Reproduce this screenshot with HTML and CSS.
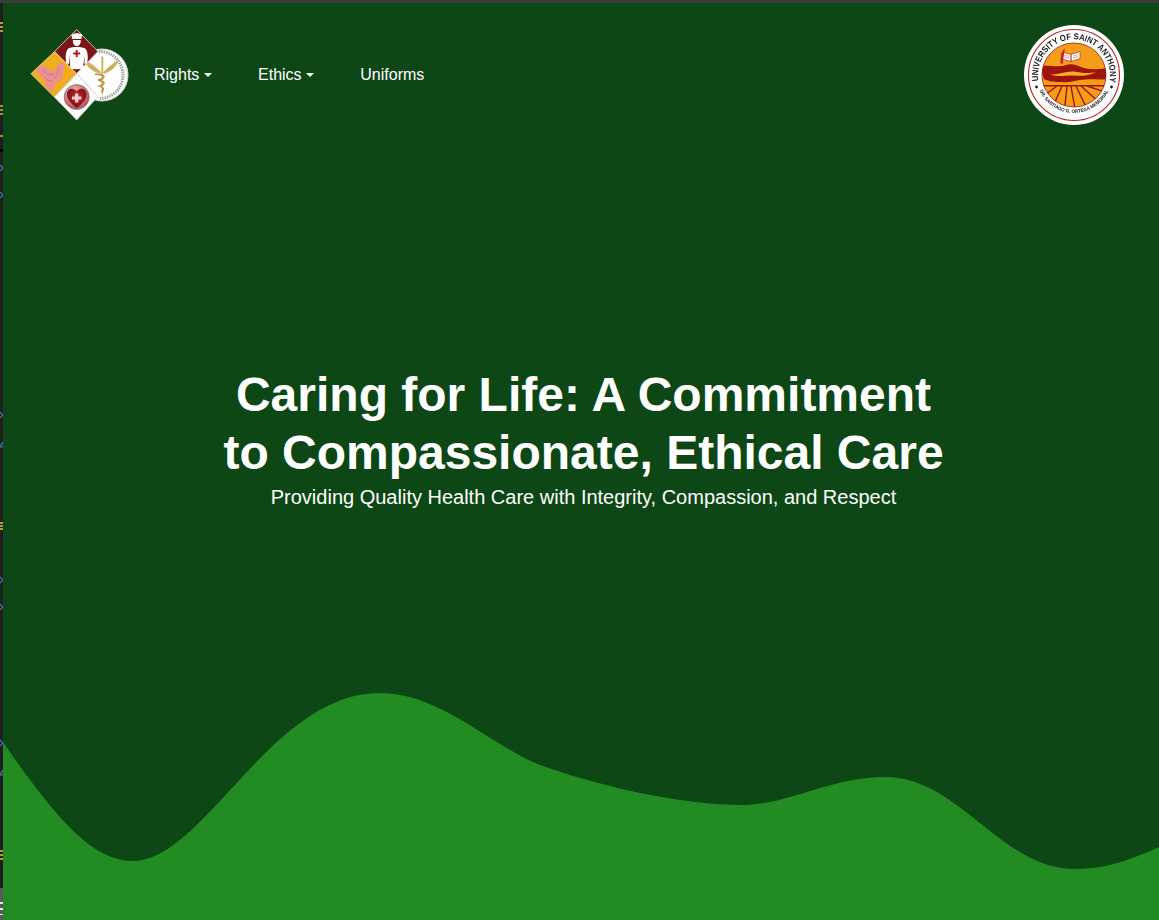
FILE: index.html
```html
<!DOCTYPE html>
<html lang="en">
<head>
<meta charset="utf-8">
<title>Caring for Life</title>
<link rel="stylesheet" href="styles.css">
</head>
<body>
<div class="topbar"></div>
<div class="frame">
  <aside class="strip">
    <svg class="strip-art" viewBox="0 3 3 917" preserveAspectRatio="none" aria-hidden="true">
      <g fill="#b59a2f">
        <rect y="22" width="3" height="2"/><rect y="26" width="3" height="2"/><rect y="30" width="3" height="2"/>
        <rect y="522" width="3" height="2"/><rect y="525" width="3" height="2"/><rect y="528" width="3" height="2"/>
        <rect y="850" width="3" height="2"/><rect y="854" width="3" height="2"/><rect y="858" width="3" height="2"/>
      </g>
      <g fill="#8c9a3a">
        <rect y="105" width="3" height="2"/><rect y="109" width="3" height="2"/><rect y="113" width="3" height="2"/><rect y="135" width="3" height="2"/>
      </g>
      <rect y="149" width="3" height="3" fill="#000"/>
      <g fill="none" stroke="#4a7ab8" stroke-width="1.200">
        <path d="M0 165l3 3-3 3M0 192l3 3-3 3M0 412l3 3-3 3M3 442l-3 5h3M0 577l3 3-3 3M0 604l3 3-3 3M0 740l3 3-3 3M3 770l-3 5h3"/>
      </g>
      <rect y="888" width="3" height="32" fill="#5a5a5a"/>
      <g fill="#e6e6e6">
        <rect y="902" width="3" height="2"/><rect y="908" width="3" height="2"/><rect y="914" width="3" height="1"/>
      </g>
    </svg>
  </aside>
  <div class="page">
    <svg class="wave" viewBox="3 680 1156 240" preserveAspectRatio="none" aria-hidden="true">
      <path d="M3 742C50 810 90 861 132 861C205 861 270 693 380 693C440 693 490 745 540 765C610 790 690 805 740 805C790 805 830 777 885 777C960 777 1000 869 1075 869C1105 869 1130 860 1159 847V920H3Z"/>
    </svg>
    <header class="header">
      <a class="logo" href="#" aria-label="Nursing logo">
        <svg viewBox="0 0 100 100" class="logo-art">
          <defs>
            <radialGradient id="heart-ring" cx=".4" cy=".35" r=".8">
              <stop offset="0" stop-color="#f3c9c9"/>
              <stop offset=".7" stop-color="#c9585c"/>
              <stop offset="1" stop-color="#7a7a7a"/>
            </radialGradient>
            <radialGradient id="heart-fill" cx=".5" cy=".4" r=".7">
              <stop offset="0" stop-color="#c9282e"/>
              <stop offset="1" stop-color="#5e0b10"/>
            </radialGradient>
          </defs>
          <circle cx="72" cy="50" r="26" fill="#fff" stroke="#d6d6d6" stroke-width="1"/>
          <path d="M69 26.500A23.500 23.500 0 1 1 70 73.500" fill="none" stroke="#a3a3a3" stroke-width="3" stroke-dasharray="1.500 .9"/>
          <g fill="#cfb05c">
            <path d="M71.300 31.500h2l-.2 36-.8 3.500-.8-3.500z"/>
            <path d="M71 47C66 42 61 38 54 34.500C56 41 62 47 71 49z"/>
            <path d="M73.500 47C78 42 83 38 89 34.500C87 41 81 47 73.500 49z"/>
          </g>
          <path d="M65 49C76 50 77 53 68 55C76 57 76 59 69 61C75 63 74 65 71.500 67" fill="none" stroke="#ad8f3c" stroke-width="1.300"/>
          <path d="M46.700 4.500L68 26.500 46.700 48.500 24.500 26.500z" fill="#7d1518" stroke="#e8e3e0" stroke-width=".8"/>
          <path d="M24.500 26.500L46.700 48.700 24.300 72 1 48.700z" fill="#f0ad1e" stroke="#e8d9a8" stroke-width=".8"/>
          <path d="M46.700 48.700L68 71.500 46.700 95 24.300 72z" fill="#fff" stroke="#c8c8c8" stroke-width=".9"/>
          <path d="M41.500 10C44 7.500 49.500 7.500 52 10L51.500 14H42z" fill="#fff"/>
          <path d="M42.800 15H50.800C50.800 19 49 21 46.800 21C44.600 21 42.800 19 42.800 15z" fill="#fff"/>
          <path d="M39 23C43 21.500 50.500 21.500 54.500 23C58 25 58.500 33 57 38.500L54.500 39 54.500 30 53 43.500C49 44.500 44 44.500 40.500 43.500L39 30 39 39 36.500 38.500C35 33 35.500 25 39 23z" fill="#fff"/>
          <path d="M45.700 25h2v2.500h2.500v2h-2.500v2.500h-2v-2.500h-2.500v-2h2.500z" fill="#b01e22"/>
          <g fill="#ea8f95">
            <ellipse cx="13" cy="46" rx="5.800" ry="5.300"/>
            <ellipse cx="20" cy="52" rx="9" ry="6.500" transform="rotate(25 20 52)"/>
            <ellipse cx="30" cy="45" rx="4" ry="7.500" transform="rotate(15 30 45)"/>
            <ellipse cx="27" cy="53" rx="6.500" ry="4.200" transform="rotate(-35 27 53)"/>
            <ellipse cx="20" cy="61" rx="3.800" ry="4.500"/>
          </g>
          <path d="M13 44C15 49 20 50 24 49M28 41C29 46 28 49 25 53M15 52C17 56 21 57 23 55" fill="none" stroke="#c9626a" stroke-width=".6"/>
          <circle cx="46.700" cy="72" r="12.500" fill="url(#heart-ring)"/>
          <circle cx="46.700" cy="72" r="12.500" fill="none" stroke="#6f6f6f" stroke-width=".7"/>
          <path d="M46.700 83C41 78.500 37 74.500 37 69.500C37 63 44 62 46.700 66.500C49.400 62 56.400 63 56.400 69.500C56.400 74.500 52.400 78.500 46.700 83z" fill="url(#heart-fill)"/>
          <path d="M45 68.500h3.400v3h3v3h-3v3h-3.400v-3h-3v-3h3z" fill="#f2cfcf"/>
        </svg>
      </a>
      <nav class="nav">
        <a class="nav-link caret" href="#">Rights</a>
        <a class="nav-link caret" href="#">Ethics</a>
        <a class="nav-link" href="#">Uniforms</a>
      </nav>
      <a class="seal" href="#" aria-label="University of Saint Anthony">
        <svg viewBox="0 0 100 100" class="seal-art">
          <defs>
            <clipPath id="disc"><circle cx="50" cy="50" r="32"/></clipPath>
            <path id="arc-top" d="M14.600 57A36 36 0 1 1 85.400 57"/>
            <path id="arc-bottom" d="M15.100 65A38 38 0 0 0 84.900 65"/>
          </defs>
          <circle cx="50" cy="50" r="50" fill="#fff"/>
          <circle cx="50" cy="50" r="45.500" fill="none" stroke="#b5272d" stroke-width="1.100"/>
          <text class="seal-top"><textPath href="#arc-top" startOffset="1" textLength="125" lengthAdjust="spacingAndGlyphs">UNIVERSITY OF SAINT ANTHONY</textPath></text>
          <text class="seal-bottom"><textPath href="#arc-bottom" startOffset="1" textLength="86" lengthAdjust="spacingAndGlyphs">DR. SANTIAGO G. ORTEGA MEMORIAL</textPath></text>
          <circle cx="12.500" cy="62" r="1.400" fill="#222"/>
          <circle cx="87.500" cy="62" r="1.400" fill="#222"/>
          <circle cx="50" cy="50" r="32" fill="#f59c18"/>
          <g clip-path="url(#disc)">
            <path d="M16 41C26 40 34 43 42 40C48 38 54 41 60 43C68 45 76 44 84 43V54C76 55 70 54 62 54.500C52 55 46 58 38 57C32 56.500 28 58 20 54z" fill="#9c1410"/>
            <path d="M26 49.500C36 49.500 42 46 50 46.500C56 47 62 49.500 72 47C64 51.500 56 51 50 50.500C42 50 36 52.500 26 49.500z" fill="#f8ac24"/>
            <path d="M16 60H84V61.500H16z" fill="#9c1410"/>
            <g fill="none" stroke="#9c1410" stroke-width="1.400">
              <path d="M33 61L18 72M38 61L28 84M43 61L40 90M47 61L52 90M52 61L64 86M57 61L76 78M63 61L84 68"/>
            </g>
          </g>
          <circle cx="50" cy="50" r="32" fill="none" stroke="#8b1a12" stroke-width=".8"/>
          <path d="M38 27L47 29.500 47 36.500 38 34zM47 29.500L56 26.500 56 33.500 47 36.500z" fill="#fff" stroke="#9c1410" stroke-width=".6"/>
          <path d="M40 30l5 1.300M40 32l5 1.300M49 31l5-1.500M49 33l5-1.500" fill="none" stroke="#c4474a" stroke-width=".5"/>
          <path d="M36.500 38C36 32 38 27 40.500 23C41 27 39 32 39 39z" fill="#c9201c"/>
        </svg>
      </a>
    </header>
    <main class="hero">
      <h1 class="title">Caring for Life: A Commitment<br>to Compassionate, Ethical Care</h1>
      <p class="subtitle">Providing Quality Health Care with Integrity, Compassion, and Respect</p>
    </main>
  </div>
</div>
</body>
</html>
```
FILE: styles.css
```css
html, body {
  margin: 0;
  padding: 0;
  height: 100%;
}

body {
  display: flex;
  flex-direction: column;
  overflow: hidden;
  background: #0d4715;
  font-family: "Liberation Sans", Arial, sans-serif;
  color: #fff;
}

.topbar {
  flex: 0 0 3px;
  background: #3c3c3c;
}

.frame {
  flex: 1;
  display: flex;
  min-height: 0;
}

.strip {
  flex: 0 0 3px;
  background: #1f1f1f;
}

.strip-art {
  display: block;
  width: 3px;
  height: 100%;
}

.page {
  flex: 1;
  position: relative;
  overflow: hidden;
  background: #0d4715;
}

.wave {
  position: absolute;
  left: 0;
  right: 0;
  bottom: 0;
  width: 100%;
  height: 240px;
  display: block;
}

.wave path {
  fill: #228b22;
}

.header {
  position: relative;
  display: flex;
  align-items: center;
  padding: 22px 35px 0 27px;
}

.logo,
.seal {
  display: block;
  flex: 0 0 100px;
  height: 100px;
}

.logo-art,
.seal-art {
  display: block;
  width: 100px;
  height: 100px;
  filter: blur(0.35px);
}

.nav {
  flex: 1;
  display: flex;
  align-items: center;
  gap: 46px;
  padding-left: 24px;
}

.nav-link {
  color: #fff;
  font-size: 16px;
  line-height: 24px;
  text-decoration: none;
}

.caret::after {
  content: "";
  display: inline-block;
  margin-left: 4.700px;
  vertical-align: 3.500px;
  border-top: 4.800px solid #fff;
  border-left: 4.800px solid transparent;
  border-right: 4.800px solid transparent;
}

.seal-top {
  font: bold 8.800px "Liberation Sans", Arial, sans-serif;
  fill: #1c1c1c;
}

.seal-bottom {
  font: bold 5px "Liberation Sans", Arial, sans-serif;
  fill: #1c1c1c;
}

.hero {
  position: relative;
  padding: 241px 0 0 5px;
  text-align: center;
}

.title {
  margin: 0;
  font-size: 48px;
  line-height: 57.600px;
  font-weight: 700;
}

.subtitle {
  margin: 0;
  font-size: 20px;
  line-height: 32px;
}
```
